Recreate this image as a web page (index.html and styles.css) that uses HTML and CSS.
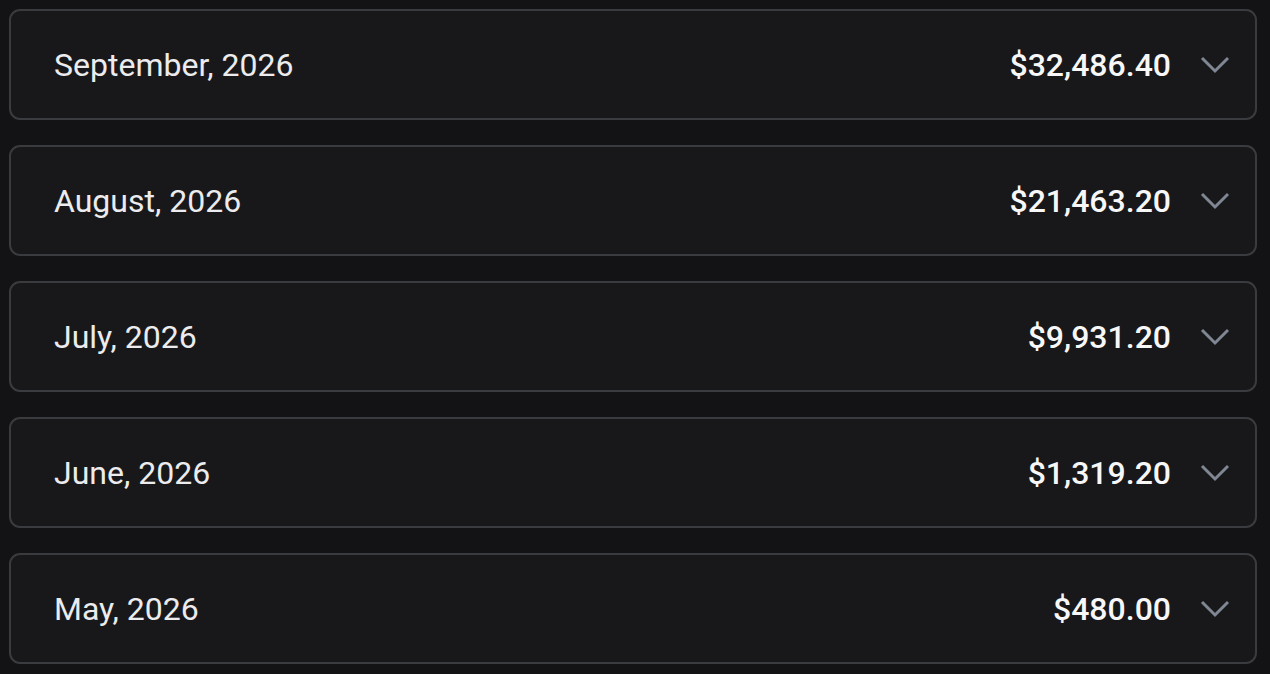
FILE: index.html
```html
<!DOCTYPE html>
<html lang="en">
<head>
    <meta charset="UTF-8">
    <meta name="viewport" content="width=device-width, initial-scale=1.0">
    <title>Monthly totals</title>
    <link rel="stylesheet" href="styles.css">
</head>
<body>
    <div class="month-list">
        <div class="month-card">
            <span class="month-name">September, 2026</span>
            <span class="month-total">$32,486.40</span>
            <svg class="chevron" viewBox="0 0 32 20"><polyline points="3,3 16,16 29,3"/></svg>
        </div>
        <div class="month-card">
            <span class="month-name">August, 2026</span>
            <span class="month-total">$21,463.20</span>
            <svg class="chevron" viewBox="0 0 32 20"><polyline points="3,3 16,16 29,3"/></svg>
        </div>
        <div class="month-card">
            <span class="month-name">July, 2026</span>
            <span class="month-total">$9,931.20</span>
            <svg class="chevron" viewBox="0 0 32 20"><polyline points="3,3 16,16 29,3"/></svg>
        </div>
        <div class="month-card">
            <span class="month-name">June, 2026</span>
            <span class="month-total">$1,319.20</span>
            <svg class="chevron" viewBox="0 0 32 20"><polyline points="3,3 16,16 29,3"/></svg>
        </div>
        <div class="month-card">
            <span class="month-name">May, 2026</span>
            <span class="month-total">$480.00</span>
            <svg class="chevron" viewBox="0 0 32 20"><polyline points="3,3 16,16 29,3"/></svg>
        </div>
    </div>
</body>
</html>
```

FILE: styles.css
```css
body {
    margin: 0;
    padding: 9px 13px 9px 9px;
    background: #131315;
    font-family: Roboto, "Noto Sans", sans-serif;
}

.month-list {
    display: flex;
    flex-direction: column;
    gap: 25px;
}

.month-card {
    display: flex;
    align-items: center;
    height: 107px;
    padding: 0 24px 0 43px;
    background: #18181b;
    border: 2px solid #3a3b3f;
    border-radius: 11px;
}

.month-name {
    flex: 1;
    color: #ececee;
    font-size: 32px;
    font-weight: 400;
}

.month-total {
    color: #f7f7f8;
    font-size: 32px;
    font-weight: 500;
}

.chevron {
    width: 32px;
    height: 20px;
    margin-left: 28px;
    fill: none;
    stroke: #7f8792;
    stroke-width: 3;
}
```
